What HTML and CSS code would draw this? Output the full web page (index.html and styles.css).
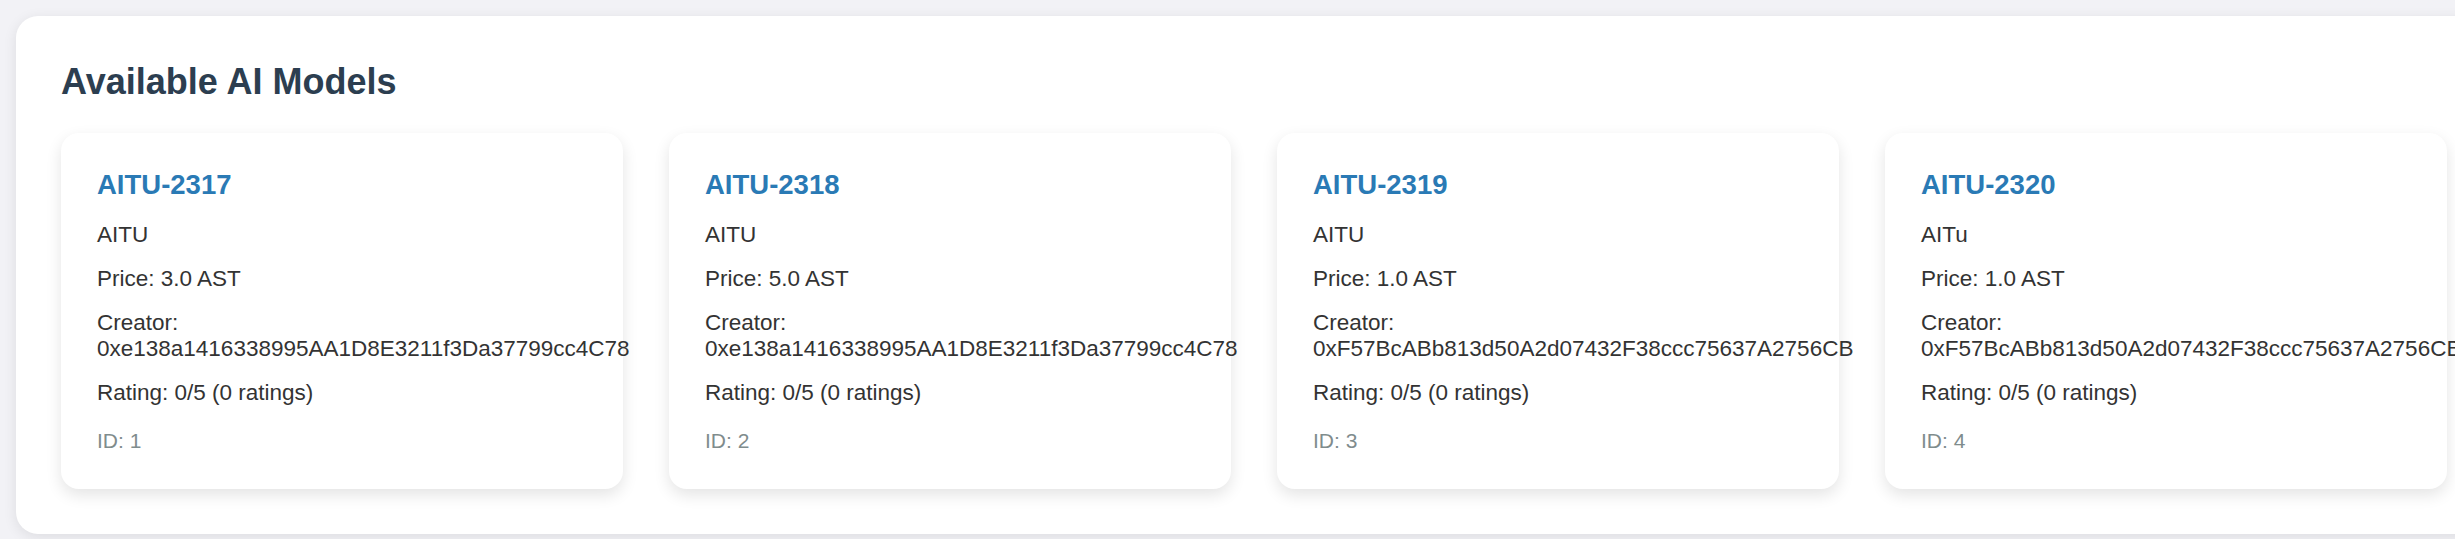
FILE: index.html
```html
<!DOCTYPE html>
<html lang="en">
<head>
<meta charset="utf-8">
<title>Available AI Models</title>
<link rel="stylesheet" href="styles.css">
</head>
<body>
  <section class="panel">
    <h2 class="panel-title">Available AI Models</h2>
    <div class="model-list">
      <article class="model-card">
        <h3 class="model-name">AITU-2317</h3>
        <p class="model-line">AITU</p>
        <p class="model-line">Price: 3.0 AST</p>
        <p class="model-line">Creator: 0xe138a1416338995AA1D8E3211f3Da37799cc4C78</p>
        <p class="model-line">Rating: 0/5 (0 ratings)</p>
        <p class="model-id">ID: 1</p>
      </article>
      <article class="model-card">
        <h3 class="model-name">AITU-2318</h3>
        <p class="model-line">AITU</p>
        <p class="model-line">Price: 5.0 AST</p>
        <p class="model-line">Creator: 0xe138a1416338995AA1D8E3211f3Da37799cc4C78</p>
        <p class="model-line">Rating: 0/5 (0 ratings)</p>
        <p class="model-id">ID: 2</p>
      </article>
      <article class="model-card">
        <h3 class="model-name">AITU-2319</h3>
        <p class="model-line">AITU</p>
        <p class="model-line">Price: 1.0 AST</p>
        <p class="model-line">Creator: 0xF57BcABb813d50A2d07432F38ccc75637A2756CB</p>
        <p class="model-line">Rating: 0/5 (0 ratings)</p>
        <p class="model-id">ID: 3</p>
      </article>
      <article class="model-card">
        <h3 class="model-name">AITU-2320</h3>
        <p class="model-line">AITu</p>
        <p class="model-line">Price: 1.0 AST</p>
        <p class="model-line">Creator: 0xF57BcABb813d50A2d07432F38ccc75637A2756CB</p>
        <p class="model-line">Rating: 0/5 (0 ratings)</p>
        <p class="model-id">ID: 4</p>
      </article>
    </div>
  </section>
</body>
</html>
```

FILE: styles.css
```css
html, body {
  margin: 0;
  padding: 0;
}

body {
  background: #f2f2f6;
  font-family: "Liberation Sans", Arial, sans-serif;
  color: #333333;
  padding: 16px;
  overflow: hidden;
}

.panel {
  display: inline-block;
  background: #ffffff;
  border-radius: 22px;
  padding: 45px;
  box-shadow: 0 3px 14px rgba(0, 0, 0, 0.09);
}

.panel-title {
  margin: 0 0 30px;
  font-size: 36px;
  line-height: 42px;
  font-weight: 700;
  color: #2c3e50;
}

.model-list {
  display: flex;
  gap: 46px;
}

.model-card {
  flex: 0 0 562px;
  box-sizing: border-box;
  width: 562px;
  background: #ffffff;
  border-radius: 18px;
  padding: 36px;
  box-shadow: 0 6px 16px rgba(0, 0, 0, 0.11);
}

.model-name {
  margin: 0 0 21.5px;
  font-size: 27.5px;
  line-height: 31px;
  font-weight: 700;
  color: #2a7ab5;
}

.model-line {
  margin: 18px 0 0;
  font-size: 22.5px;
  line-height: 26px;
  color: #333333;
}

.model-name + .model-line {
  margin-top: 0;
}

.model-id {
  margin: 23.5px 0 0;
  font-size: 21px;
  line-height: 24px;
  color: #7f8c8d;
}
```
